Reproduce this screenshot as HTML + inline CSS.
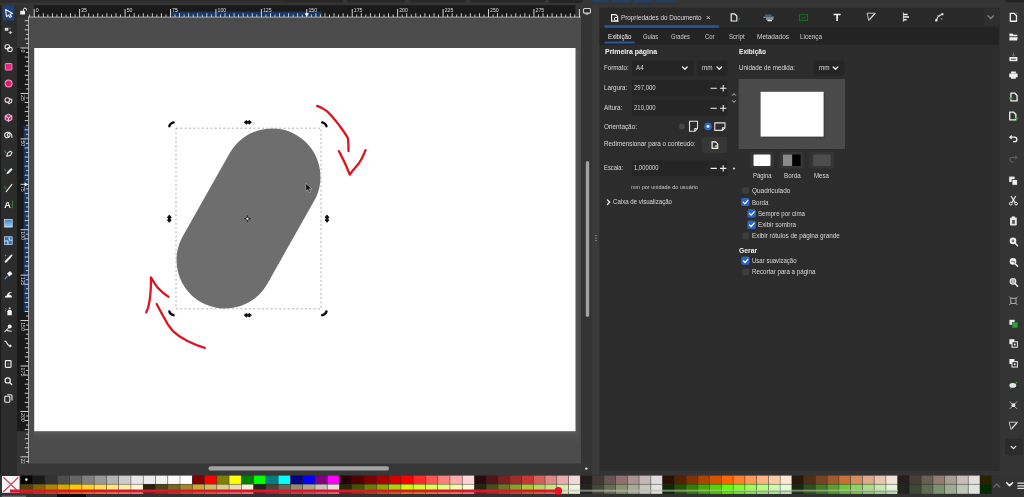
<!DOCTYPE html>
<html lang="pt-BR">
<head>
<meta charset="utf-8">
<title>Inkscape - Propriedades do Documento</title>
<style>
html,body{margin:0;padding:0;background:#2d2d2d;}
body{width:1024px;height:497px;overflow:hidden;position:relative;font-family:"Liberation Sans",sans-serif;color:#e6e6e6;}
#root{position:absolute;left:0;top:0;width:1024px;height:497px;overflow:hidden;background:#2e2e2e;filter:blur(0.45px);}
svg{position:absolute;left:0;top:0;}
.rl{font-family:"Liberation Sans",sans-serif;font-size:5.2px;fill:#dadada;}
.t{position:absolute;white-space:nowrap;font-size:7px;line-height:10px;color:#dadada;transform-origin:0 50%;}
.b{font-weight:bold;color:#f4f4f4;}
.box{position:absolute;background:#242424;border-radius:2px;}
.cb{position:absolute;width:7px;height:7px;border-radius:1.5px;background:#3e3e3e;}
.cb.on{background:#2f6fd0;}
</style>
</head>
<body>
<div id="root">

<!-- ======== base layer: canvas, rulers, palette ======== -->
<svg id="base" width="1024" height="497" viewBox="0 0 1024 497">
<defs>
  <linearGradient id="shB" x1="0" y1="0" x2="0" y2="1">
    <stop offset="0" stop-color="#5a5a5a"/><stop offset="0.3" stop-color="#4f4f4f"/><stop offset="1" stop-color="#4a4a4a"/>
  </linearGradient>
  <linearGradient id="shR" x1="0" y1="0" x2="1" y2="0">
    <stop offset="0" stop-color="#575757"/><stop offset="1" stop-color="#4b4b4b"/>
  </linearGradient>
</defs>
<!-- top strip -->
<rect x="0" y="0" width="1024" height="8" fill="#353535"/>
<rect x="0" y="0" width="283" height="2.600" fill="#2c2c2c"/>
<rect x="283" y="-3" width="60" height="5.5" rx="2" fill="#272727"/>
<rect x="347" y="-3" width="58" height="5.5" rx="2" fill="#272727"/>
<rect x="410" y="-3" width="56" height="5.5" rx="2" fill="#272727"/>
<rect x="470" y="-3" width="75" height="5.5" rx="2" fill="#272727"/>
<rect x="549" y="-3" width="34" height="6" rx="2" fill="#242424"/>
<rect x="592" y="-3" width="17" height="5.2" rx="1.5" fill="#223f66"/>
<rect x="612" y="-3" width="19" height="5.2" rx="1.5" fill="#223f66"/>
<rect x="634" y="-3" width="19" height="5.2" rx="1.5" fill="#223f66"/>
<rect x="656" y="-3" width="19.5" height="5.2" rx="1.5" fill="#223f66"/>
<rect x="1004.8" y="-3" width="30" height="5.2" rx="2" fill="#232323"/>

<!-- left toolbar -->
<rect x="0" y="6" width="17" height="470" fill="#2c2c2c"/>
<!-- canvas desk -->
<rect x="17" y="6" width="564" height="458" fill="#4b4b4b"/>
<!-- page shadow + page -->
<rect x="34.2" y="431" width="545" height="16" fill="url(#shB)"/>
<rect x="575.5" y="50" width="5.5" height="385" fill="url(#shR)"/>
<rect x="34.2" y="48" width="541.3" height="383.2" fill="#ffffff"/>

<!-- rulers -->
<rect x="17" y="5.2" width="564" height="11.8" fill="#353535"/>
<rect x="17" y="5.2" width="11.5" height="458.3" fill="#353535"/>
<rect x="34.2" y="5.2" width="541.3" height="11.8" fill="#1a1a1a"/>
<rect x="17" y="48" width="11.5" height="383.2" fill="#1a1a1a"/>
<rect x="17" y="5.2" width="11.5" height="11.8" fill="#323232"/>
<rect x="170.5" y="11.6" width="151.5" height="5.2" fill="#1b3763"/>
<rect x="23.6" y="126.300" width="4.800" height="185" fill="#1b3763"/>
<rect x="29.21" y="14.40" width="0.9" height="2.6" fill="#e4e4e4" opacity="0.9"/>
<rect x="33.75" y="9.00" width="0.9" height="8" fill="#e4e4e4" opacity="1"/>
<rect x="38.29" y="14.40" width="0.9" height="2.6" fill="#e4e4e4" opacity="0.9"/>
<rect x="42.84" y="13.20" width="0.9" height="3.8" fill="#e4e4e4" opacity="0.95"/>
<rect x="47.38" y="14.40" width="0.9" height="2.6" fill="#e4e4e4" opacity="0.9"/>
<rect x="51.92" y="13.20" width="0.9" height="3.8" fill="#e4e4e4" opacity="0.95"/>
<rect x="56.47" y="14.40" width="0.9" height="2.6" fill="#e4e4e4" opacity="0.9"/>
<rect x="61.01" y="13.20" width="0.9" height="3.8" fill="#e4e4e4" opacity="0.95"/>
<rect x="65.55" y="14.40" width="0.9" height="2.6" fill="#e4e4e4" opacity="0.9"/>
<rect x="70.09" y="13.20" width="0.9" height="3.8" fill="#e4e4e4" opacity="0.95"/>
<rect x="74.64" y="14.40" width="0.9" height="2.6" fill="#e4e4e4" opacity="0.9"/>
<rect x="79.18" y="9.00" width="0.9" height="8" fill="#e4e4e4" opacity="1"/>
<rect x="83.72" y="14.40" width="0.9" height="2.6" fill="#e4e4e4" opacity="0.9"/>
<rect x="88.27" y="13.20" width="0.9" height="3.8" fill="#e4e4e4" opacity="0.95"/>
<rect x="92.81" y="14.40" width="0.9" height="2.6" fill="#e4e4e4" opacity="0.9"/>
<rect x="97.35" y="13.20" width="0.9" height="3.8" fill="#e4e4e4" opacity="0.95"/>
<rect x="101.89" y="14.40" width="0.9" height="2.6" fill="#e4e4e4" opacity="0.9"/>
<rect x="106.44" y="13.20" width="0.9" height="3.8" fill="#e4e4e4" opacity="0.95"/>
<rect x="110.98" y="14.40" width="0.9" height="2.6" fill="#e4e4e4" opacity="0.9"/>
<rect x="115.52" y="13.20" width="0.9" height="3.8" fill="#e4e4e4" opacity="0.95"/>
<rect x="120.07" y="14.40" width="0.9" height="2.6" fill="#e4e4e4" opacity="0.9"/>
<rect x="124.61" y="9.00" width="0.9" height="8" fill="#e4e4e4" opacity="1"/>
<rect x="129.15" y="14.40" width="0.9" height="2.6" fill="#e4e4e4" opacity="0.9"/>
<rect x="133.70" y="13.20" width="0.9" height="3.8" fill="#e4e4e4" opacity="0.95"/>
<rect x="138.24" y="14.40" width="0.9" height="2.6" fill="#e4e4e4" opacity="0.9"/>
<rect x="142.78" y="13.20" width="0.9" height="3.8" fill="#e4e4e4" opacity="0.95"/>
<rect x="147.32" y="14.40" width="0.9" height="2.6" fill="#e4e4e4" opacity="0.9"/>
<rect x="151.87" y="13.20" width="0.9" height="3.8" fill="#e4e4e4" opacity="0.95"/>
<rect x="156.41" y="14.40" width="0.9" height="2.6" fill="#e4e4e4" opacity="0.9"/>
<rect x="160.95" y="13.20" width="0.9" height="3.8" fill="#e4e4e4" opacity="0.95"/>
<rect x="165.50" y="14.40" width="0.9" height="2.6" fill="#e4e4e4" opacity="0.9"/>
<rect x="170.04" y="9.00" width="0.9" height="8" fill="#e4e4e4" opacity="1"/>
<rect x="174.58" y="14.40" width="0.9" height="2.6" fill="#e4e4e4" opacity="0.9"/>
<rect x="179.13" y="13.20" width="0.9" height="3.8" fill="#e4e4e4" opacity="0.95"/>
<rect x="183.67" y="14.40" width="0.9" height="2.6" fill="#e4e4e4" opacity="0.9"/>
<rect x="188.21" y="13.20" width="0.9" height="3.8" fill="#e4e4e4" opacity="0.95"/>
<rect x="192.75" y="14.40" width="0.9" height="2.6" fill="#e4e4e4" opacity="0.9"/>
<rect x="197.30" y="13.20" width="0.9" height="3.8" fill="#e4e4e4" opacity="0.95"/>
<rect x="201.84" y="14.40" width="0.9" height="2.6" fill="#e4e4e4" opacity="0.9"/>
<rect x="206.38" y="13.20" width="0.9" height="3.8" fill="#e4e4e4" opacity="0.95"/>
<rect x="210.93" y="14.40" width="0.9" height="2.6" fill="#e4e4e4" opacity="0.9"/>
<rect x="215.47" y="9.00" width="0.9" height="8" fill="#e4e4e4" opacity="1"/>
<rect x="220.01" y="14.40" width="0.9" height="2.6" fill="#e4e4e4" opacity="0.9"/>
<rect x="224.56" y="13.20" width="0.9" height="3.8" fill="#e4e4e4" opacity="0.95"/>
<rect x="229.10" y="14.40" width="0.9" height="2.6" fill="#e4e4e4" opacity="0.9"/>
<rect x="233.64" y="13.20" width="0.9" height="3.8" fill="#e4e4e4" opacity="0.95"/>
<rect x="238.19" y="14.40" width="0.9" height="2.6" fill="#e4e4e4" opacity="0.9"/>
<rect x="242.73" y="13.20" width="0.9" height="3.8" fill="#e4e4e4" opacity="0.95"/>
<rect x="247.27" y="14.40" width="0.9" height="2.6" fill="#e4e4e4" opacity="0.9"/>
<rect x="251.81" y="13.20" width="0.9" height="3.8" fill="#e4e4e4" opacity="0.95"/>
<rect x="256.36" y="14.40" width="0.9" height="2.6" fill="#e4e4e4" opacity="0.9"/>
<rect x="260.90" y="9.00" width="0.9" height="8" fill="#e4e4e4" opacity="1"/>
<rect x="265.44" y="14.40" width="0.9" height="2.6" fill="#e4e4e4" opacity="0.9"/>
<rect x="269.99" y="13.20" width="0.9" height="3.8" fill="#e4e4e4" opacity="0.95"/>
<rect x="274.53" y="14.40" width="0.9" height="2.6" fill="#e4e4e4" opacity="0.9"/>
<rect x="279.07" y="13.20" width="0.9" height="3.8" fill="#e4e4e4" opacity="0.95"/>
<rect x="283.62" y="14.40" width="0.9" height="2.6" fill="#e4e4e4" opacity="0.9"/>
<rect x="288.16" y="13.20" width="0.9" height="3.8" fill="#e4e4e4" opacity="0.95"/>
<rect x="292.70" y="14.40" width="0.9" height="2.6" fill="#e4e4e4" opacity="0.9"/>
<rect x="297.24" y="13.20" width="0.9" height="3.8" fill="#e4e4e4" opacity="0.95"/>
<rect x="301.79" y="14.40" width="0.9" height="2.6" fill="#e4e4e4" opacity="0.9"/>
<rect x="306.33" y="9.00" width="0.9" height="8" fill="#e4e4e4" opacity="1"/>
<rect x="310.87" y="14.40" width="0.9" height="2.6" fill="#e4e4e4" opacity="0.9"/>
<rect x="315.42" y="13.20" width="0.9" height="3.8" fill="#e4e4e4" opacity="0.95"/>
<rect x="319.96" y="14.40" width="0.9" height="2.6" fill="#e4e4e4" opacity="0.9"/>
<rect x="324.50" y="13.20" width="0.9" height="3.8" fill="#e4e4e4" opacity="0.95"/>
<rect x="329.05" y="14.40" width="0.9" height="2.6" fill="#e4e4e4" opacity="0.9"/>
<rect x="333.59" y="13.20" width="0.9" height="3.8" fill="#e4e4e4" opacity="0.95"/>
<rect x="338.13" y="14.40" width="0.9" height="2.6" fill="#e4e4e4" opacity="0.9"/>
<rect x="342.67" y="13.20" width="0.9" height="3.8" fill="#e4e4e4" opacity="0.95"/>
<rect x="347.22" y="14.40" width="0.9" height="2.6" fill="#e4e4e4" opacity="0.9"/>
<rect x="351.76" y="9.00" width="0.9" height="8" fill="#e4e4e4" opacity="1"/>
<rect x="356.30" y="14.40" width="0.9" height="2.6" fill="#e4e4e4" opacity="0.9"/>
<rect x="360.85" y="13.20" width="0.9" height="3.8" fill="#e4e4e4" opacity="0.95"/>
<rect x="365.39" y="14.40" width="0.9" height="2.6" fill="#e4e4e4" opacity="0.9"/>
<rect x="369.93" y="13.20" width="0.9" height="3.8" fill="#e4e4e4" opacity="0.95"/>
<rect x="374.47" y="14.40" width="0.9" height="2.6" fill="#e4e4e4" opacity="0.9"/>
<rect x="379.02" y="13.20" width="0.9" height="3.8" fill="#e4e4e4" opacity="0.95"/>
<rect x="383.56" y="14.40" width="0.9" height="2.6" fill="#e4e4e4" opacity="0.9"/>
<rect x="388.10" y="13.20" width="0.9" height="3.8" fill="#e4e4e4" opacity="0.95"/>
<rect x="392.65" y="14.40" width="0.9" height="2.6" fill="#e4e4e4" opacity="0.9"/>
<rect x="397.19" y="9.00" width="0.9" height="8" fill="#e4e4e4" opacity="1"/>
<rect x="401.73" y="14.40" width="0.9" height="2.6" fill="#e4e4e4" opacity="0.9"/>
<rect x="406.28" y="13.20" width="0.9" height="3.8" fill="#e4e4e4" opacity="0.95"/>
<rect x="410.82" y="14.40" width="0.9" height="2.6" fill="#e4e4e4" opacity="0.9"/>
<rect x="415.36" y="13.20" width="0.9" height="3.8" fill="#e4e4e4" opacity="0.95"/>
<rect x="419.90" y="14.40" width="0.9" height="2.6" fill="#e4e4e4" opacity="0.9"/>
<rect x="424.45" y="13.20" width="0.9" height="3.8" fill="#e4e4e4" opacity="0.95"/>
<rect x="428.99" y="14.40" width="0.9" height="2.6" fill="#e4e4e4" opacity="0.9"/>
<rect x="433.53" y="13.20" width="0.9" height="3.8" fill="#e4e4e4" opacity="0.95"/>
<rect x="438.08" y="14.40" width="0.9" height="2.6" fill="#e4e4e4" opacity="0.9"/>
<rect x="442.62" y="9.00" width="0.9" height="8" fill="#e4e4e4" opacity="1"/>
<rect x="447.16" y="14.40" width="0.9" height="2.6" fill="#e4e4e4" opacity="0.9"/>
<rect x="451.71" y="13.20" width="0.9" height="3.8" fill="#e4e4e4" opacity="0.95"/>
<rect x="456.25" y="14.40" width="0.9" height="2.6" fill="#e4e4e4" opacity="0.9"/>
<rect x="460.79" y="13.20" width="0.9" height="3.8" fill="#e4e4e4" opacity="0.95"/>
<rect x="465.33" y="14.40" width="0.9" height="2.6" fill="#e4e4e4" opacity="0.9"/>
<rect x="469.88" y="13.20" width="0.9" height="3.8" fill="#e4e4e4" opacity="0.95"/>
<rect x="474.42" y="14.40" width="0.9" height="2.6" fill="#e4e4e4" opacity="0.9"/>
<rect x="478.96" y="13.20" width="0.9" height="3.8" fill="#e4e4e4" opacity="0.95"/>
<rect x="483.51" y="14.40" width="0.9" height="2.6" fill="#e4e4e4" opacity="0.9"/>
<rect x="488.05" y="9.00" width="0.9" height="8" fill="#e4e4e4" opacity="1"/>
<rect x="492.59" y="14.40" width="0.9" height="2.6" fill="#e4e4e4" opacity="0.9"/>
<rect x="497.14" y="13.20" width="0.9" height="3.8" fill="#e4e4e4" opacity="0.95"/>
<rect x="501.68" y="14.40" width="0.9" height="2.6" fill="#e4e4e4" opacity="0.9"/>
<rect x="506.22" y="13.20" width="0.9" height="3.8" fill="#e4e4e4" opacity="0.95"/>
<rect x="510.76" y="14.40" width="0.9" height="2.6" fill="#e4e4e4" opacity="0.9"/>
<rect x="515.31" y="13.20" width="0.9" height="3.8" fill="#e4e4e4" opacity="0.95"/>
<rect x="519.85" y="14.40" width="0.9" height="2.6" fill="#e4e4e4" opacity="0.9"/>
<rect x="524.39" y="13.20" width="0.9" height="3.8" fill="#e4e4e4" opacity="0.95"/>
<rect x="528.94" y="14.40" width="0.9" height="2.6" fill="#e4e4e4" opacity="0.9"/>
<rect x="533.48" y="9.00" width="0.9" height="8" fill="#e4e4e4" opacity="1"/>
<rect x="538.02" y="14.40" width="0.9" height="2.6" fill="#e4e4e4" opacity="0.9"/>
<rect x="542.57" y="13.20" width="0.9" height="3.8" fill="#e4e4e4" opacity="0.95"/>
<rect x="547.11" y="14.40" width="0.9" height="2.6" fill="#e4e4e4" opacity="0.9"/>
<rect x="551.65" y="13.20" width="0.9" height="3.8" fill="#e4e4e4" opacity="0.95"/>
<rect x="556.19" y="14.40" width="0.9" height="2.6" fill="#e4e4e4" opacity="0.9"/>
<rect x="560.74" y="13.20" width="0.9" height="3.8" fill="#e4e4e4" opacity="0.95"/>
<rect x="565.28" y="14.40" width="0.9" height="2.6" fill="#e4e4e4" opacity="0.9"/>
<rect x="569.82" y="13.20" width="0.9" height="3.8" fill="#e4e4e4" opacity="0.95"/>
<rect x="574.37" y="14.40" width="0.9" height="2.6" fill="#e4e4e4" opacity="0.9"/>
<rect x="578.91" y="9.00" width="0.9" height="8" fill="#e4e4e4" opacity="1"/>
<text x="35.80" y="12" class="rl">0</text>
<text x="81.23" y="12" class="rl">25</text>
<text x="126.66" y="12" class="rl">50</text>
<text x="172.09" y="12" class="rl">75</text>
<text x="217.52" y="12" class="rl">100</text>
<text x="262.95" y="12" class="rl">125</text>
<text x="308.38" y="12" class="rl">150</text>
<text x="353.81" y="12" class="rl">175</text>
<text x="399.24" y="12" class="rl">200</text>
<text x="444.67" y="12" class="rl">225</text>
<text x="490.10" y="12" class="rl">250</text>
<text x="535.53" y="12" class="rl">275</text>
<rect x="24.70" y="20.29" width="3.8" height="0.9" fill="#e4e4e4" opacity="0.95"/>
<rect x="25.90" y="24.84" width="2.6" height="0.9" fill="#e4e4e4" opacity="0.9"/>
<rect x="24.70" y="29.38" width="3.8" height="0.9" fill="#e4e4e4" opacity="0.95"/>
<rect x="25.90" y="33.92" width="2.6" height="0.9" fill="#e4e4e4" opacity="0.9"/>
<rect x="24.70" y="38.46" width="3.8" height="0.9" fill="#e4e4e4" opacity="0.95"/>
<rect x="25.90" y="43.01" width="2.6" height="0.9" fill="#e4e4e4" opacity="0.9"/>
<rect x="20.50" y="47.55" width="8" height="0.9" fill="#e4e4e4" opacity="1"/>
<rect x="25.90" y="52.09" width="2.6" height="0.9" fill="#e4e4e4" opacity="0.9"/>
<rect x="24.70" y="56.64" width="3.8" height="0.9" fill="#e4e4e4" opacity="0.95"/>
<rect x="25.90" y="61.18" width="2.6" height="0.9" fill="#e4e4e4" opacity="0.9"/>
<rect x="24.70" y="65.72" width="3.8" height="0.9" fill="#e4e4e4" opacity="0.95"/>
<rect x="25.90" y="70.27" width="2.6" height="0.9" fill="#e4e4e4" opacity="0.9"/>
<rect x="24.70" y="74.81" width="3.8" height="0.9" fill="#e4e4e4" opacity="0.95"/>
<rect x="25.90" y="79.35" width="2.6" height="0.9" fill="#e4e4e4" opacity="0.9"/>
<rect x="24.70" y="83.89" width="3.8" height="0.9" fill="#e4e4e4" opacity="0.95"/>
<rect x="25.90" y="88.44" width="2.6" height="0.9" fill="#e4e4e4" opacity="0.9"/>
<rect x="20.50" y="92.98" width="8" height="0.9" fill="#e4e4e4" opacity="1"/>
<rect x="25.90" y="97.52" width="2.6" height="0.9" fill="#e4e4e4" opacity="0.9"/>
<rect x="24.70" y="102.07" width="3.8" height="0.9" fill="#e4e4e4" opacity="0.95"/>
<rect x="25.90" y="106.61" width="2.6" height="0.9" fill="#e4e4e4" opacity="0.9"/>
<rect x="24.70" y="111.15" width="3.8" height="0.9" fill="#e4e4e4" opacity="0.95"/>
<rect x="25.90" y="115.69" width="2.6" height="0.9" fill="#e4e4e4" opacity="0.9"/>
<rect x="24.70" y="120.24" width="3.8" height="0.9" fill="#e4e4e4" opacity="0.95"/>
<rect x="25.90" y="124.78" width="2.6" height="0.9" fill="#e4e4e4" opacity="0.9"/>
<rect x="24.70" y="129.32" width="3.8" height="0.9" fill="#e4e4e4" opacity="0.95"/>
<rect x="25.90" y="133.87" width="2.6" height="0.9" fill="#e4e4e4" opacity="0.9"/>
<rect x="20.50" y="138.41" width="8" height="0.9" fill="#e4e4e4" opacity="1"/>
<rect x="25.90" y="142.95" width="2.6" height="0.9" fill="#e4e4e4" opacity="0.9"/>
<rect x="24.70" y="147.50" width="3.8" height="0.9" fill="#e4e4e4" opacity="0.95"/>
<rect x="25.90" y="152.04" width="2.6" height="0.9" fill="#e4e4e4" opacity="0.9"/>
<rect x="24.70" y="156.58" width="3.8" height="0.9" fill="#e4e4e4" opacity="0.95"/>
<rect x="25.90" y="161.12" width="2.6" height="0.9" fill="#e4e4e4" opacity="0.9"/>
<rect x="24.70" y="165.67" width="3.8" height="0.9" fill="#e4e4e4" opacity="0.95"/>
<rect x="25.90" y="170.21" width="2.6" height="0.9" fill="#e4e4e4" opacity="0.9"/>
<rect x="24.70" y="174.75" width="3.8" height="0.9" fill="#e4e4e4" opacity="0.95"/>
<rect x="25.90" y="179.30" width="2.6" height="0.9" fill="#e4e4e4" opacity="0.9"/>
<rect x="20.50" y="183.84" width="8" height="0.9" fill="#e4e4e4" opacity="1"/>
<rect x="25.90" y="188.38" width="2.6" height="0.9" fill="#e4e4e4" opacity="0.9"/>
<rect x="24.70" y="192.93" width="3.8" height="0.9" fill="#e4e4e4" opacity="0.95"/>
<rect x="25.90" y="197.47" width="2.6" height="0.9" fill="#e4e4e4" opacity="0.9"/>
<rect x="24.70" y="202.01" width="3.8" height="0.9" fill="#e4e4e4" opacity="0.95"/>
<rect x="25.90" y="206.56" width="2.6" height="0.9" fill="#e4e4e4" opacity="0.9"/>
<rect x="24.70" y="211.10" width="3.8" height="0.9" fill="#e4e4e4" opacity="0.95"/>
<rect x="25.90" y="215.64" width="2.6" height="0.9" fill="#e4e4e4" opacity="0.9"/>
<rect x="24.70" y="220.18" width="3.8" height="0.9" fill="#e4e4e4" opacity="0.95"/>
<rect x="25.90" y="224.73" width="2.6" height="0.9" fill="#e4e4e4" opacity="0.9"/>
<rect x="20.50" y="229.27" width="8" height="0.9" fill="#e4e4e4" opacity="1"/>
<rect x="25.90" y="233.81" width="2.6" height="0.9" fill="#e4e4e4" opacity="0.9"/>
<rect x="24.70" y="238.36" width="3.8" height="0.9" fill="#e4e4e4" opacity="0.95"/>
<rect x="25.90" y="242.90" width="2.6" height="0.9" fill="#e4e4e4" opacity="0.9"/>
<rect x="24.70" y="247.44" width="3.8" height="0.9" fill="#e4e4e4" opacity="0.95"/>
<rect x="25.90" y="251.99" width="2.6" height="0.9" fill="#e4e4e4" opacity="0.9"/>
<rect x="24.70" y="256.53" width="3.8" height="0.9" fill="#e4e4e4" opacity="0.95"/>
<rect x="25.90" y="261.07" width="2.6" height="0.9" fill="#e4e4e4" opacity="0.9"/>
<rect x="24.70" y="265.61" width="3.8" height="0.9" fill="#e4e4e4" opacity="0.95"/>
<rect x="25.90" y="270.16" width="2.6" height="0.9" fill="#e4e4e4" opacity="0.9"/>
<rect x="20.50" y="274.70" width="8" height="0.9" fill="#e4e4e4" opacity="1"/>
<rect x="25.90" y="279.24" width="2.6" height="0.9" fill="#e4e4e4" opacity="0.9"/>
<rect x="24.70" y="283.79" width="3.8" height="0.9" fill="#e4e4e4" opacity="0.95"/>
<rect x="25.90" y="288.33" width="2.6" height="0.9" fill="#e4e4e4" opacity="0.9"/>
<rect x="24.70" y="292.87" width="3.8" height="0.9" fill="#e4e4e4" opacity="0.95"/>
<rect x="25.90" y="297.42" width="2.6" height="0.9" fill="#e4e4e4" opacity="0.9"/>
<rect x="24.70" y="301.96" width="3.8" height="0.9" fill="#e4e4e4" opacity="0.95"/>
<rect x="25.90" y="306.50" width="2.6" height="0.9" fill="#e4e4e4" opacity="0.9"/>
<rect x="24.70" y="311.04" width="3.8" height="0.9" fill="#e4e4e4" opacity="0.95"/>
<rect x="25.90" y="315.59" width="2.6" height="0.9" fill="#e4e4e4" opacity="0.9"/>
<rect x="20.50" y="320.13" width="8" height="0.9" fill="#e4e4e4" opacity="1"/>
<rect x="25.90" y="324.67" width="2.6" height="0.9" fill="#e4e4e4" opacity="0.9"/>
<rect x="24.70" y="329.22" width="3.8" height="0.9" fill="#e4e4e4" opacity="0.95"/>
<rect x="25.90" y="333.76" width="2.6" height="0.9" fill="#e4e4e4" opacity="0.9"/>
<rect x="24.70" y="338.30" width="3.8" height="0.9" fill="#e4e4e4" opacity="0.95"/>
<rect x="25.90" y="342.85" width="2.6" height="0.9" fill="#e4e4e4" opacity="0.9"/>
<rect x="24.70" y="347.39" width="3.8" height="0.9" fill="#e4e4e4" opacity="0.95"/>
<rect x="25.90" y="351.93" width="2.6" height="0.9" fill="#e4e4e4" opacity="0.9"/>
<rect x="24.70" y="356.47" width="3.8" height="0.9" fill="#e4e4e4" opacity="0.95"/>
<rect x="25.90" y="361.02" width="2.6" height="0.9" fill="#e4e4e4" opacity="0.9"/>
<rect x="20.50" y="365.56" width="8" height="0.9" fill="#e4e4e4" opacity="1"/>
<rect x="25.90" y="370.10" width="2.6" height="0.9" fill="#e4e4e4" opacity="0.9"/>
<rect x="24.70" y="374.65" width="3.8" height="0.9" fill="#e4e4e4" opacity="0.95"/>
<rect x="25.90" y="379.19" width="2.6" height="0.9" fill="#e4e4e4" opacity="0.9"/>
<rect x="24.70" y="383.73" width="3.8" height="0.9" fill="#e4e4e4" opacity="0.95"/>
<rect x="25.90" y="388.27" width="2.6" height="0.9" fill="#e4e4e4" opacity="0.9"/>
<rect x="24.70" y="392.82" width="3.8" height="0.9" fill="#e4e4e4" opacity="0.95"/>
<rect x="25.90" y="397.36" width="2.6" height="0.9" fill="#e4e4e4" opacity="0.9"/>
<rect x="24.70" y="401.90" width="3.8" height="0.9" fill="#e4e4e4" opacity="0.95"/>
<rect x="25.90" y="406.45" width="2.6" height="0.9" fill="#e4e4e4" opacity="0.9"/>
<rect x="20.50" y="410.99" width="8" height="0.9" fill="#e4e4e4" opacity="1"/>
<rect x="25.90" y="415.53" width="2.6" height="0.9" fill="#e4e4e4" opacity="0.9"/>
<rect x="24.70" y="420.08" width="3.8" height="0.9" fill="#e4e4e4" opacity="0.95"/>
<rect x="25.90" y="424.62" width="2.6" height="0.9" fill="#e4e4e4" opacity="0.9"/>
<rect x="24.70" y="429.16" width="3.8" height="0.9" fill="#e4e4e4" opacity="0.95"/>
<rect x="25.90" y="433.70" width="2.6" height="0.9" fill="#e4e4e4" opacity="0.9"/>
<rect x="24.70" y="438.25" width="3.8" height="0.9" fill="#e4e4e4" opacity="0.95"/>
<rect x="25.90" y="442.79" width="2.6" height="0.9" fill="#e4e4e4" opacity="0.9"/>
<rect x="24.70" y="447.33" width="3.8" height="0.9" fill="#e4e4e4" opacity="0.95"/>
<rect x="25.90" y="451.88" width="2.6" height="0.9" fill="#e4e4e4" opacity="0.9"/>
<rect x="20.50" y="456.42" width="8" height="0.9" fill="#e4e4e4" opacity="1"/>
<rect x="25.90" y="460.96" width="2.6" height="0.9" fill="#e4e4e4" opacity="0.9"/>
<text transform="translate(20.9 49.60) rotate(90)" class="rl">0</text>
<text transform="translate(20.9 95.03) rotate(90)" class="rl">25</text>
<text transform="translate(20.9 140.46) rotate(90)" class="rl">50</text>
<text transform="translate(20.9 185.89) rotate(90)" class="rl">75</text>
<text transform="translate(20.9 231.32) rotate(90)" class="rl">100</text>
<text transform="translate(20.9 276.75) rotate(90)" class="rl">125</text>
<text transform="translate(20.9 322.18) rotate(90)" class="rl">150</text>
<text transform="translate(20.9 367.61) rotate(90)" class="rl">175</text>
<text transform="translate(20.9 413.04) rotate(90)" class="rl">200</text>
<text transform="translate(20.9 458.47) rotate(90)" class="rl">225</text>
<rect x="28" y="16.6" width="553" height="0.9" fill="#d8d8d8" opacity=".8"/>
<rect x="28" y="16.6" width="0.9" height="447" fill="#d8d8d8" opacity=".8"/>
<!-- ruler pointer markers -->
<path d="M304.6 13.2h4.4l-2.2 3.6z" fill="#ffffff"/>
<path d="M24.6 182.2v4.4l3.6-2.2z" fill="#ffffff"/>


<!-- ======== canvas objects ======== -->
<g id="obj">
  <!-- pill -->
  <g transform="translate(248.5 218.5) rotate(29.5)">
    <rect x="-48.500" y="-96.200" width="97" height="192.400" rx="48.500" ry="48.500" fill="#6e6e6e"/>
  </g>
  <!-- selection box -->
  <rect x="176" y="128.2" width="145" height="180.6" fill="none" stroke="#a6a6a6" stroke-width="0.900" stroke-dasharray="2 2.3"/>
  <!-- handles -->
  <g fill="none" stroke="#0a0a0a" stroke-width="2.400" stroke-linecap="round">
    <path d="M169.300 126.200q0.800-3 4.300-3.800"/>
    <path d="M322.200 122.400q3.500 0.800 4.300 3.800"/>
    <path d="M169.300 311.400q0.800 3 4.300 3.800"/>
    <path d="M322.200 315.200q3.500-0.800 4.300-3.800"/>
  </g>
  <g fill="#0a0a0a" stroke="#0a0a0a" stroke-width="1" stroke-linejoin="round">
    <path d="M244.200 122.300l2.400-1.900v1.100h2.400v-1.100l2.400 1.900-2.400 1.900v-1.100h-2.400v1.100z"/>
    <path d="M244.200 315.200l2.400-1.900v1.100h2.400v-1.100l2.400 1.900-2.400 1.900v-1.100h-2.400v1.100z"/>
    <path d="M169.300 215.100l1.900 2.400h-1.100v2.400h1.100l-1.900 2.400-1.900-2.400h1.100v-2.400h-1.100z"/>
    <path d="M327 215.100l1.900 2.400h-1.100v2.400h1.100l-1.900 2.400-1.900-2.400h1.100v-2.400h-1.100z"/>
  </g>
  <!-- rotation centre -->
  <g stroke="#111" stroke-width="0.9" fill="none">
    <path d="M247.400 215.400v6.600M244.100 218.700h6.600"/>
    <circle cx="247.400" cy="218.700" r="1.500" fill="#eee" stroke="#111" stroke-width="0.7"/>
  </g>
  <!-- red hand drawn arrows -->
  <g fill="none" stroke="#dc1420" stroke-width="2.300" stroke-linecap="round" stroke-linejoin="round">
    <path d="M317.200 105.900C321 107.400 324.400 109 327.100 111.300C331.600 115.200 335 119.800 338.900 124.900C342.400 129.600 345.800 134 348 138.400C348.600 142.400 348.400 146.800 348.500 151.100"/>
    <path d="M338.900 151.100C341 155.200 342.800 158.600 344.400 162C346.400 166.200 348 170.200 349.800 174.600C352.400 170.800 355.200 167.800 357.900 164.600C361 160.600 363.400 155.800 365.500 150.200"/>
    <path d="M204.700 347.900C198 345.800 192.600 343.600 187.500 341C181.800 338.200 177 335 173 331.100C169.400 327.200 166.400 322.600 164 317.500C161.400 312.800 159 308.400 156.700 303.900"/>
    <path d="M146.200 312.400C148 309 149 305.400 149.500 301.200C150.300 296.400 150.700 291.600 150.900 286.700C151 283.600 151 280.400 150.900 277.300C153 281 155.200 284.600 157.600 287.600C160.800 291.200 164.400 294.400 168.500 296.700"/>
  </g>
  <!-- mouse cursor -->
  <path d="M305.600 183.200l0.200 8.200 2-1.900 1.500 3.100 1.300-0.600-1.500-3 2.700-0.200z" fill="#111" stroke="#ddd" stroke-width="0.500"/>
</g>

<!-- band under canvas (scrollbar) -->
<rect x="17" y="463.5" width="581" height="12.5" fill="#373737"/>
<rect x="208.5" y="466.2" width="180.5" height="4.4" rx="2.2" fill="#a2a2a2"/>
<!-- right gutter of canvas -->
<rect x="581" y="5.5" width="11" height="470" fill="#343434"/>
<rect x="591.7" y="5.5" width="7.8" height="470" fill="#3a3a3a"/>
<rect x="585.8" y="161" width="3.4" height="156" rx="1.7" fill="#a2a2a2"/>
<circle cx="586.3" cy="468.6" r="1.2" fill="#e8e8e8"/>
<rect x="583.5" y="8.5" width="7" height="4.6" rx="1" fill="#2c2c2c" stroke="#d2d2d2" stroke-width="1.1"/>
<rect x="585.6" y="13.3" width="2.8" height="1.2" fill="#e4e4e4"/>


<!-- ======== right dock panel ======== -->
<g id="panel">
  <rect x="599.5" y="7.8" width="400" height="464.4" fill="#2c2c2c"/>
  <rect x="599.5" y="7.8" width="400" height="19.6" fill="#292929"/>
  <rect x="599.5" y="27.4" width="400" height="17.4" fill="#232323"/>
  <rect x="599.5" y="471.4" width="400" height="0.9" fill="#3c3c3c"/>
  <rect x="999.5" y="7.8" width="24.5" height="468" fill="#343434"/>
  <rect x="599.5" y="472.2" width="425" height="3.5" fill="#343434"/>
  <!-- tab underline -->
  <rect x="604.3" y="25.2" width="115" height="2.6" rx="1.3" fill="#2a589e"/>
  <rect x="604.3" y="41.5" width="30.5" height="2.1" rx="1" fill="#2a589e"/>
  <!-- document icon on tab -->
  <g transform="translate(611 14)">
    <path d="M0.600 0.600h4.200l1.800 1.800v4.800h-6z" fill="none" stroke="#f2f2f2" stroke-width="1.200"/>
    <circle cx="5" cy="5" r="1.700" fill="#2a2a2a" stroke="#f2f2f2" stroke-width="1"/>
    <path d="M6.100 6.200l1.300 1.400" stroke="#f2f2f2" stroke-width="1.100"/>
  </g>
  <!-- grip dots -->
  <g fill="#c8c8c8"><circle cx="596" cy="235.500" r="0.600"/><circle cx="596" cy="238" r="0.600"/><circle cx="596" cy="240.500" r="0.600"/></g>

  <!-- entry boxes -->
  <g fill="#252525">
    <rect x="632" y="60.400" width="62" height="15.400" rx="2"/>
    <rect x="697" y="60.400" width="30.400" height="15.400" rx="2"/>
    <rect x="813.700" y="60.400" width="30.400" height="15.400" rx="2"/>
    <rect x="632" y="80.200" width="95.400" height="16.200" rx="2"/>
    <rect x="632" y="99.800" width="95.400" height="16.400" rx="2"/>
    <rect x="632" y="160.400" width="95.400" height="15.800" rx="2"/>
  </g>
  <rect x="702" y="137" width="25" height="16" rx="2" fill="#363636"/>
  <!-- combo chevrons -->
  <g fill="none" stroke="#f0f0f0" stroke-width="1.300" stroke-linecap="round" stroke-linejoin="round">
    <path d="M682.600 67l2.300 2.300 2.300-2.300"/>
    <path d="M717 67l2.300 2.300 2.300-2.300"/>
    <path d="M833.200 67l2.300 2.300 2.300-2.300"/>
    <path d="M607.400 199.900l2.300 2.300-2.300 2.300"/>
  </g>
  <!-- minus / plus -->
  <g stroke="#f0f0f0" stroke-width="1.100" stroke-linecap="butt">
    <path d="M710.600 88.200h6.200M720 88.200h6.400M723.200 85v6.400"/>
    <path d="M710.600 108.200h6.200M720 108.200h6.400M723.200 105v6.400"/>
    <path d="M710.600 168.400h6.200M720 168.400h6.400M723.200 165.200v6.400"/>
  </g>
  <!-- link chevrons + dot -->
  <g fill="none" stroke="#cfcfcf" stroke-width="0.900" stroke-linecap="round" stroke-linejoin="round">
    <path d="M732.500 95.300l1.500-1.700 1.500 1.700"/>
    <path d="M732.500 100.700l1.500 1.700 1.500-1.700"/>
  </g>
  <circle cx="734" cy="168.400" r="1" fill="#e8e8e8"/>
  <!-- orientation radios + icons -->
  <circle cx="681.800" cy="126.400" r="3" fill="#454545"/>
  <circle cx="708" cy="126.400" r="3.800" fill="#2b66c2"/>
  <circle cx="708" cy="126.400" r="1.400" fill="#ffffff"/>
  <g fill="none" stroke="#e2e2e2" stroke-width="1.100" stroke-linejoin="round">
    <path d="M689.500 121.300h8v7.200l-2.800 2.800h-5.200z"/>
    <path d="M697.500 128.500h-2.800v2.800"/>
    <path d="M714.800 122.900h10.200v5l-2.600 2.500h-7.600z"/>
    <path d="M725 127.900h-2.600v2.500"/>
  </g>
  <!-- resize-to-content icon -->
  <g transform="translate(711.600 141.400)">
    <path d="M0.500 0.500h3.600l2 2v4.500h-5.600z" fill="none" stroke="#f4f4f4" stroke-width="1.200"/>
    <circle cx="4.600" cy="4.800" r="1.200" fill="#9fd07f"/>
  </g>

  <!-- preview -->
  <rect x="738.600" y="79" width="106.400" height="70" fill="#4a4a4a"/>
  <rect x="762.200" y="93.400" width="63" height="44.800" fill="#3c3c3c" opacity=".8"/>
  <rect x="760.600" y="91.800" width="63" height="44.800" fill="#ffffff"/>
  <!-- colour buttons -->
  <g fill="#353535">
    <rect x="749.600" y="151.600" width="24.400" height="17" rx="2"/>
    <rect x="779.700" y="151.600" width="24.200" height="17" rx="2"/>
    <rect x="809.300" y="151.600" width="24.800" height="17" rx="2"/>
  </g>
  <rect x="753.500" y="154.600" width="17" height="11.300" rx="1" fill="#ffffff"/>
  <rect x="783" y="154.600" width="9.300" height="11.300" fill="#8a8a8a"/>
  <rect x="792.300" y="154.600" width="8.300" height="11.300" fill="#000000"/>
  <rect x="813.200" y="154.600" width="17.500" height="11.300" rx="1" fill="#4d4d4d"/>

  <!-- check boxes -->
  <g fill="#3d3d3d">
    <rect x="742.200" y="187.300" width="6.800" height="6.800" rx="1.500"/>
    <rect x="742.200" y="232.500" width="6.800" height="6.800" rx="1.500"/>
    <rect x="742.200" y="268.400" width="6.800" height="6.800" rx="1.500"/>
  </g>
  <g fill="#2b66c2">
    <rect x="741.200" y="197.900" width="8.200" height="8.200" rx="1.700"/>
    <rect x="747.400" y="209.200" width="8.400" height="8.400" rx="1.700"/>
    <rect x="747.400" y="220.500" width="8.400" height="8.400" rx="1.700"/>
    <rect x="741.300" y="256.600" width="8.200" height="8.200" rx="1.700"/>
  </g>
  <g fill="none" stroke="#ffffff" stroke-width="1.200" stroke-linecap="round" stroke-linejoin="round">
    <path d="M743.200 202.100l1.700 1.700 3-3.400"/>
    <path d="M749.500 213.500l1.700 1.700 3-3.400"/>
    <path d="M749.500 224.800l1.700 1.700 3-3.400"/>
    <path d="M743.300 260.800l1.700 1.700 3-3.400"/>
  </g>
</g>


<!-- ======== left toolbox icons ======== -->
<g id="ltools">
  <rect x="0" y="5.500" width="1.100" height="470" fill="#1c1c1c"/>
  <rect x="2.700" y="5.600" width="11.600" height="15" rx="1.500" fill="#1f427a"/>
  <!-- selector -->
  <path d="M5.600 9.600l0.900 7.200 2-1.700 1.500 2.300 1.500-0.900-1.400-2.300 2.500-0.800z" fill="none" stroke="#f4f4f4" stroke-width="1.100" stroke-linejoin="round"/>
  <!-- lock -->
  <rect x="20.200" y="10.800" width="4.800" height="3.800" rx="0.600" fill="#f2f2f2"/>
  <path d="M23.400 10.800v-1.100a1.600 1.600 0 0 1 3.200 0v0.800" fill="none" stroke="#f2f2f2" stroke-width="1"/>
  <!-- node tool -->
  <rect x="4.800" y="27.800" width="3.600" height="3" fill="#d8d8d8"/>
  <path d="M9.300 28.200h1.300M10.400 31.200l1.300 1.300-1.300 1.300-1.300-1.300z" stroke="#d8d8d8" stroke-width="0.800" fill="#d8d8d8"/>
  <!-- shape builder -->
  <g fill="none" stroke="#ececec" stroke-width="1.150">
    <rect x="5" y="44.700" width="4.600" height="4.200" rx="1.700"/>
    <rect x="7.600" y="47.300" width="4.600" height="4.200" rx="1.700"/>
  </g>
  <!-- rect / ellipse -->
  <rect x="5.300" y="63.500" width="6.600" height="6.600" rx="0.600" fill="#e0287f" stroke="#ff8fc4" stroke-width="0.900"/>
  <circle cx="8.600" cy="83.600" r="3.400" fill="#cf1f6e" stroke="#ff86c0" stroke-width="1.200"/>
  <!-- star/polygon -->
  <g fill="none" stroke="#f3d3e3" stroke-width="1.100">
    <circle cx="7.300" cy="100" r="2.300"/>
    <path d="M9.200 98.800l2.600 0.600-0.300 3-2.600 1.200-1.600-1.400"/>
  </g>
  <!-- 3d box -->
  <g fill="#c92a75" stroke="#f8c9de" stroke-width="1">
    <path d="M8.500 114.200l3.300 1.700v3.700l-3.300 1.700-3.300-1.700v-3.700z"/>
    <path d="M8.500 121.300v-3.400l3.300-2M8.500 117.900l-3.300-2" fill="none"/>
  </g>
  <!-- spiral -->
  <g fill="none" stroke="#e8e8e8" stroke-width="1.100" stroke-linecap="round">
    <path d="M8.600 136.300a1.400 1.400 0 1 1 1.400-1.600a2.700 2.700 0 1 1-2.900-2.300a3.800 3.800 0 0 1 4.800 3.800v1.200"/>
  </g>
  <!-- pen -->
  <path d="M4.600 150.200l1.500 3.300" stroke="#2f8f3a" stroke-width="1.100"/>
  <path d="M6.700 156.200l1-3.300 2.700-1.700 1.600 1.500-1.700 2.800z" fill="none" stroke="#efefef" stroke-width="1.100" stroke-linejoin="round"/>
  <!-- pencil -->
  <path d="M4.400 168.600l1.600 2.600" stroke="#2f8f3a" stroke-width="1.100"/>
  <path d="M6.400 174.200l0.800-2.200 4-4 1.400 1.400-4 4z" fill="#efefef"/>
  <!-- calligraphy -->
  <path d="M4.300 186l1.600 2.800" stroke="#2f8f3a" stroke-width="1.100"/>
  <path d="M6.200 191.600l5.700-7.200" stroke="#e4e4e4" stroke-width="1.200" stroke-linecap="round"/>
  <!-- text -->
  <text x="4.300" y="208.300" font-family="Liberation Sans, sans-serif" font-weight="bold" font-size="9.200" fill="#f4f4f4">A</text>
  <path d="M12.400 200.600v7.800" stroke="#2f8f3a" stroke-width="0.900"/>
  <!-- gradient -->
  <defs><linearGradient id="gr1" x1="0" y1="0" x2="0" y2="1"><stop offset="0" stop-color="#3d86c8"/><stop offset="1" stop-color="#9fd0f2"/></linearGradient></defs>
  <rect x="4.600" y="219.500" width="7.600" height="7.600" fill="url(#gr1)" stroke="#cfe3f2" stroke-width="0.700"/>
  <!-- mesh gradient -->
  <rect x="4.600" y="236.800" width="7.600" height="7.600" fill="#2c76b8" stroke="#cfe3f2" stroke-width="0.700"/>
  <path d="M4.600 241h3.400v3.400M12.200 240.200h-3v-3.400" fill="none" stroke="#e6f1fa" stroke-width="0.900"/>
  <!-- dropper -->
  <path d="M5.600 261.800l4.400-4.600" stroke="#e6e6e6" stroke-width="2" stroke-linecap="round"/>
  <path d="M9.400 256.200l2.400-1.900 0.900 0.900-1.900 2.400z" fill="#f2f2f2"/>
  <circle cx="5.600" cy="255.600" r="0.800" fill="#4a9bd8"/>
  <!-- bucket -->
  <path d="M7 273.400l3.200-2.300 2.300 2.800-3.400 2.600z" fill="#efefef"/>
  <path d="M5.200 278.600l2-2.200" stroke="#4a9bd8" stroke-width="1.300" stroke-linecap="round"/>
  <!-- tweak -->
  <path d="M4.800 297.400h7.200c0-2-1.400-2.800-3-2.600 0.600-1.600 1.800-2.400 3.200-2.600-2.600-1-5 0.600-5.300 3.200-1.200 0-2 0.800-2.100 2z" fill="#f2f2f2"/>
  <!-- spray -->
  <path d="M7.400 315.200h4.400v-4l-1-1.400h-2.400l-1 1.400z" fill="#f2f2f2"/>
  <path d="M8.800 308.200h1.800" stroke="#f2f2f2" stroke-width="1.200"/>
  <path d="M5.400 308.400l1 1M5 310.800h1" stroke="#bdbdbd" stroke-width="0.700"/>
  <!-- eraser -->
  <circle cx="9.700" cy="326.400" r="2" fill="#efefef"/>
  <path d="M4.800 331.600l3.400-3.200M7.400 330.600l4 0.600" stroke="#dcdcdc" stroke-width="1.100" stroke-linecap="round"/>
  <!-- connector -->
  <path d="M5 341.200c2.400 0.400 1.600 3.600 4.400 4.600" fill="none" stroke="#efefef" stroke-width="1.200" stroke-linecap="round"/>
  <path d="M10.200 344.200l1.700 1.700-1.700 1.700-1.700-1.700z" fill="#efefef"/>
  <!-- measure / page -->
  <rect x="5.400" y="360.600" width="5.600" height="6.800" rx="0.800" fill="none" stroke="#ececec" stroke-width="1.200"/>
  <path d="M7.400 364h1.800" stroke="#cfcfcf" stroke-width="0.800"/>
  <!-- zoom -->
  <circle cx="7.700" cy="380.400" r="2.600" fill="none" stroke="#ececec" stroke-width="1.200"/>
  <path d="M9.700 382.500l2 2" stroke="#ececec" stroke-width="1.300" stroke-linecap="round"/>
  <!-- pages -->
  <g fill="none" stroke="#ececec" stroke-width="1.100">
    <path d="M7.200 394.800h3.800a1 1 0 0 1 1 1v4.800"/>
    <rect x="4.800" y="396.200" width="5" height="6" rx="0.900"/>
  </g>
</g>

<!-- palette area -->
<rect x="0" y="475.4" width="1024" height="21.6" fill="#323232"/>
<rect x="20.50" y="475.6" width="12.27" height="8.60" fill="#000000"/>
<rect x="32.77" y="475.6" width="12.27" height="8.60" fill="#1a1a1a"/>
<rect x="45.04" y="475.6" width="12.27" height="8.60" fill="#333333"/>
<rect x="57.31" y="475.6" width="12.27" height="8.60" fill="#4d4d4d"/>
<rect x="69.58" y="475.6" width="12.27" height="8.60" fill="#666666"/>
<rect x="81.85" y="475.6" width="12.27" height="8.60" fill="#808080"/>
<rect x="94.12" y="475.6" width="12.27" height="8.60" fill="#999999"/>
<rect x="106.39" y="475.6" width="12.27" height="8.60" fill="#b3b3b3"/>
<rect x="118.66" y="475.6" width="12.27" height="8.60" fill="#cccccc"/>
<rect x="130.93" y="475.6" width="12.27" height="8.60" fill="#e6e6e6"/>
<rect x="143.20" y="475.6" width="12.27" height="8.60" fill="#ececec"/>
<rect x="155.47" y="475.6" width="12.27" height="8.60" fill="#f2f2f2"/>
<rect x="167.74" y="475.6" width="12.27" height="8.60" fill="#f9f9f9"/>
<rect x="180.01" y="475.6" width="12.27" height="8.60" fill="#ffffff"/>
<rect x="192.28" y="475.6" width="12.27" height="8.60" fill="#800000"/>
<rect x="204.55" y="475.6" width="12.27" height="8.60" fill="#ff0000"/>
<rect x="216.82" y="475.6" width="12.27" height="8.60" fill="#808000"/>
<rect x="229.09" y="475.6" width="12.27" height="8.60" fill="#ffff00"/>
<rect x="241.36" y="475.6" width="12.27" height="8.60" fill="#008000"/>
<rect x="253.63" y="475.6" width="12.27" height="8.60" fill="#00ff00"/>
<rect x="265.90" y="475.6" width="12.27" height="8.60" fill="#008080"/>
<rect x="278.17" y="475.6" width="12.27" height="8.60" fill="#00ffff"/>
<rect x="290.44" y="475.6" width="12.27" height="8.60" fill="#000080"/>
<rect x="302.71" y="475.6" width="12.27" height="8.60" fill="#0000ff"/>
<rect x="314.98" y="475.6" width="12.27" height="8.60" fill="#800080"/>
<rect x="327.25" y="475.6" width="12.27" height="8.60" fill="#ff00ff"/>
<rect x="339.52" y="475.6" width="12.27" height="8.60" fill="#2b0000"/>
<rect x="351.79" y="475.6" width="12.27" height="8.60" fill="#550000"/>
<rect x="364.06" y="475.6" width="12.27" height="8.60" fill="#800000"/>
<rect x="376.33" y="475.6" width="12.27" height="8.60" fill="#aa0000"/>
<rect x="388.60" y="475.6" width="12.27" height="8.60" fill="#d40000"/>
<rect x="400.87" y="475.6" width="12.27" height="8.60" fill="#ff0000"/>
<rect x="413.14" y="475.6" width="12.27" height="8.60" fill="#ff2a2a"/>
<rect x="425.41" y="475.6" width="12.27" height="8.60" fill="#ff5555"/>
<rect x="437.68" y="475.6" width="12.27" height="8.60" fill="#ff8080"/>
<rect x="449.95" y="475.6" width="12.27" height="8.60" fill="#ffaaaa"/>
<rect x="462.22" y="475.6" width="12.27" height="8.60" fill="#ffd5d5"/>
<rect x="474.49" y="475.6" width="11.76" height="8.60" fill="#280b0b"/>
<rect x="486.25" y="475.6" width="11.75" height="8.60" fill="#501616"/>
<rect x="498.01" y="475.6" width="11.75" height="8.60" fill="#782121"/>
<rect x="509.76" y="475.6" width="11.75" height="8.60" fill="#a02c2c"/>
<rect x="521.52" y="475.6" width="11.75" height="8.60" fill="#c83737"/>
<rect x="533.27" y="475.6" width="11.75" height="8.60" fill="#d35f5f"/>
<rect x="545.03" y="475.6" width="11.75" height="8.60" fill="#de8787"/>
<rect x="556.78" y="475.6" width="11.75" height="8.60" fill="#e9afaf"/>
<rect x="568.54" y="475.6" width="11.75" height="8.60" fill="#f4d7d7"/>
<rect x="580.29" y="475.6" width="11.75" height="8.60" fill="#241c1c"/>
<rect x="592.05" y="475.6" width="11.76" height="8.60" fill="#483737"/>
<rect x="603.81" y="475.6" width="11.75" height="8.60" fill="#6c5353"/>
<rect x="615.56" y="475.6" width="11.76" height="8.60" fill="#916f6f"/>
<rect x="627.32" y="475.6" width="11.75" height="8.60" fill="#ac9393"/>
<rect x="639.07" y="475.6" width="11.75" height="8.60" fill="#c8b7b7"/>
<rect x="650.83" y="475.6" width="11.75" height="8.60" fill="#e3dbdb"/>
<rect x="662.58" y="475.6" width="11.75" height="8.60" fill="#2b1100"/>
<rect x="674.34" y="475.6" width="11.75" height="8.60" fill="#552200"/>
<rect x="686.09" y="475.6" width="11.75" height="8.60" fill="#803300"/>
<rect x="697.85" y="475.6" width="11.75" height="8.60" fill="#aa4400"/>
<rect x="709.60" y="475.6" width="11.75" height="8.60" fill="#d45500"/>
<rect x="721.36" y="475.6" width="11.75" height="8.60" fill="#ff6600"/>
<rect x="733.11" y="475.6" width="11.75" height="8.60" fill="#ff7f2a"/>
<rect x="744.87" y="475.6" width="11.75" height="8.60" fill="#ff9955"/>
<rect x="756.62" y="475.6" width="11.75" height="8.60" fill="#ffb380"/>
<rect x="768.38" y="475.6" width="11.75" height="8.60" fill="#ffccaa"/>
<rect x="780.13" y="475.6" width="11.75" height="8.60" fill="#ffe6d5"/>
<rect x="791.88" y="475.6" width="11.76" height="8.60" fill="#28170b"/>
<rect x="803.64" y="475.6" width="11.75" height="8.60" fill="#502d16"/>
<rect x="815.39" y="475.6" width="11.76" height="8.60" fill="#784421"/>
<rect x="827.15" y="475.6" width="11.75" height="8.60" fill="#a05a2c"/>
<rect x="838.90" y="475.6" width="11.76" height="8.60" fill="#c87137"/>
<rect x="850.66" y="475.6" width="11.75" height="8.60" fill="#d38d5f"/>
<rect x="862.41" y="475.6" width="11.76" height="8.60" fill="#deaa87"/>
<rect x="874.17" y="475.6" width="11.75" height="8.60" fill="#e9c6af"/>
<rect x="885.92" y="475.6" width="11.76" height="8.60" fill="#f4e3d7"/>
<rect x="897.68" y="475.6" width="11.75" height="8.60" fill="#241f1c"/>
<rect x="909.43" y="475.6" width="11.76" height="8.60" fill="#483e37"/>
<rect x="921.19" y="475.6" width="11.75" height="8.60" fill="#6c5d53"/>
<rect x="932.95" y="475.6" width="11.75" height="8.60" fill="#917c6f"/>
<rect x="944.70" y="475.6" width="11.75" height="8.60" fill="#ac9d93"/>
<rect x="956.46" y="475.6" width="11.75" height="8.60" fill="#c8beb7"/>
<rect x="968.21" y="475.6" width="11.75" height="8.60" fill="#e3dedb"/>
<rect x="979.97" y="475.6" width="11.75" height="8.60" fill="#2b2200"/>
<rect x="20.50" y="484.2" width="12.27" height="9.60" fill="#554400"/>
<rect x="32.77" y="484.2" width="12.27" height="9.60" fill="#806600"/>
<rect x="45.04" y="484.2" width="12.27" height="9.60" fill="#aa8800"/>
<rect x="57.31" y="484.2" width="12.27" height="9.60" fill="#d4aa00"/>
<rect x="69.58" y="484.2" width="12.27" height="9.60" fill="#ffcc00"/>
<rect x="81.85" y="484.2" width="12.27" height="9.60" fill="#ffd42a"/>
<rect x="94.12" y="484.2" width="12.27" height="9.60" fill="#ffdd55"/>
<rect x="106.39" y="484.2" width="12.27" height="9.60" fill="#ffe680"/>
<rect x="118.66" y="484.2" width="12.27" height="9.60" fill="#ffeeaa"/>
<rect x="130.93" y="484.2" width="12.27" height="9.60" fill="#fff6d5"/>
<rect x="143.20" y="484.2" width="12.27" height="9.60" fill="#28220b"/>
<rect x="155.47" y="484.2" width="12.27" height="9.60" fill="#504416"/>
<rect x="167.74" y="484.2" width="12.27" height="9.60" fill="#786721"/>
<rect x="180.01" y="484.2" width="12.27" height="9.60" fill="#a0892c"/>
<rect x="192.28" y="484.2" width="12.27" height="9.60" fill="#c8ab37"/>
<rect x="204.55" y="484.2" width="12.27" height="9.60" fill="#d3bc5f"/>
<rect x="216.82" y="484.2" width="12.27" height="9.60" fill="#decd87"/>
<rect x="229.09" y="484.2" width="12.27" height="9.60" fill="#e9ddaf"/>
<rect x="241.36" y="484.2" width="12.27" height="9.60" fill="#f4eed7"/>
<rect x="253.63" y="484.2" width="12.27" height="9.60" fill="#24221c"/>
<rect x="265.90" y="484.2" width="12.27" height="9.60" fill="#484537"/>
<rect x="278.17" y="484.2" width="12.27" height="9.60" fill="#6c6753"/>
<rect x="290.44" y="484.2" width="12.27" height="9.60" fill="#918a6f"/>
<rect x="302.71" y="484.2" width="12.27" height="9.60" fill="#aca793"/>
<rect x="314.98" y="484.2" width="12.27" height="9.60" fill="#c8c4b7"/>
<rect x="327.25" y="484.2" width="12.27" height="9.60" fill="#e3e2db"/>
<rect x="339.52" y="484.2" width="12.27" height="9.60" fill="#222b00"/>
<rect x="351.79" y="484.2" width="12.27" height="9.60" fill="#445500"/>
<rect x="364.06" y="484.2" width="12.27" height="9.60" fill="#668000"/>
<rect x="376.33" y="484.2" width="12.27" height="9.60" fill="#88aa00"/>
<rect x="388.60" y="484.2" width="12.27" height="9.60" fill="#aad400"/>
<rect x="400.87" y="484.2" width="12.27" height="9.60" fill="#ccff00"/>
<rect x="413.14" y="484.2" width="12.27" height="9.60" fill="#d4ff2a"/>
<rect x="425.41" y="484.2" width="12.27" height="9.60" fill="#ddff55"/>
<rect x="437.68" y="484.2" width="12.27" height="9.60" fill="#e5ff80"/>
<rect x="449.95" y="484.2" width="12.27" height="9.60" fill="#eeffaa"/>
<rect x="462.22" y="484.2" width="12.27" height="9.60" fill="#f6ffd5"/>
<rect x="474.49" y="484.2" width="11.76" height="9.60" fill="#22280b"/>
<rect x="486.25" y="484.2" width="11.75" height="9.60" fill="#445016"/>
<rect x="498.01" y="484.2" width="11.75" height="9.60" fill="#677821"/>
<rect x="509.76" y="484.2" width="11.75" height="9.60" fill="#89a02c"/>
<rect x="521.52" y="484.2" width="11.75" height="9.60" fill="#abc837"/>
<rect x="533.27" y="484.2" width="11.75" height="9.60" fill="#bcd35f"/>
<rect x="545.03" y="484.2" width="11.75" height="9.60" fill="#cdde87"/>
<rect x="556.78" y="484.2" width="11.75" height="9.60" fill="#dde9af"/>
<rect x="568.54" y="484.2" width="11.75" height="9.60" fill="#eef4d7"/>
<rect x="580.29" y="484.2" width="11.75" height="9.60" fill="#22241c"/>
<rect x="592.05" y="484.2" width="11.76" height="9.60" fill="#454837"/>
<rect x="603.81" y="484.2" width="11.75" height="9.60" fill="#676c53"/>
<rect x="615.56" y="484.2" width="11.76" height="9.60" fill="#8a916f"/>
<rect x="627.32" y="484.2" width="11.75" height="9.60" fill="#a7ac93"/>
<rect x="639.07" y="484.2" width="11.75" height="9.60" fill="#c4c8b7"/>
<rect x="650.83" y="484.2" width="11.75" height="9.60" fill="#e2e3db"/>
<rect x="662.58" y="484.2" width="11.75" height="9.60" fill="#112b00"/>
<rect x="674.34" y="484.2" width="11.75" height="9.60" fill="#225500"/>
<rect x="686.09" y="484.2" width="11.75" height="9.60" fill="#338000"/>
<rect x="697.85" y="484.2" width="11.75" height="9.60" fill="#44aa00"/>
<rect x="709.60" y="484.2" width="11.75" height="9.60" fill="#55d400"/>
<rect x="721.36" y="484.2" width="11.75" height="9.60" fill="#66ff00"/>
<rect x="733.11" y="484.2" width="11.75" height="9.60" fill="#7fff2a"/>
<rect x="744.87" y="484.2" width="11.75" height="9.60" fill="#99ff55"/>
<rect x="756.62" y="484.2" width="11.75" height="9.60" fill="#b3ff80"/>
<rect x="768.38" y="484.2" width="11.75" height="9.60" fill="#ccffaa"/>
<rect x="780.13" y="484.2" width="11.75" height="9.60" fill="#e5ffd5"/>
<rect x="791.88" y="484.2" width="11.76" height="9.60" fill="#17280b"/>
<rect x="803.64" y="484.2" width="11.75" height="9.60" fill="#2d5016"/>
<rect x="815.39" y="484.2" width="11.76" height="9.60" fill="#447821"/>
<rect x="827.15" y="484.2" width="11.75" height="9.60" fill="#5aa02c"/>
<rect x="838.90" y="484.2" width="11.76" height="9.60" fill="#71c837"/>
<rect x="850.66" y="484.2" width="11.75" height="9.60" fill="#8dd35f"/>
<rect x="862.41" y="484.2" width="11.76" height="9.60" fill="#aade87"/>
<rect x="874.17" y="484.2" width="11.75" height="9.60" fill="#c6e9af"/>
<rect x="885.92" y="484.2" width="11.76" height="9.60" fill="#e3f4d7"/>
<rect x="897.68" y="484.2" width="11.75" height="9.60" fill="#1f241c"/>
<rect x="909.43" y="484.2" width="11.76" height="9.60" fill="#3e4837"/>
<rect x="921.19" y="484.2" width="11.75" height="9.60" fill="#5d6c53"/>
<rect x="932.95" y="484.2" width="11.75" height="9.60" fill="#7c916f"/>
<rect x="944.70" y="484.2" width="11.75" height="9.60" fill="#9dac93"/>
<rect x="956.46" y="484.2" width="11.75" height="9.60" fill="#bec8b7"/>
<rect x="968.21" y="484.2" width="11.75" height="9.60" fill="#dee3db"/>
<rect x="979.97" y="484.2" width="11.75" height="9.60" fill="#002b00"/>
<rect x="20.15" y="475.6" width="0.7" height="18.4" fill="#2a2a2a" opacity="0.55"/>
<rect x="32.42" y="475.6" width="0.7" height="18.4" fill="#2a2a2a" opacity="0.55"/>
<rect x="44.69" y="475.6" width="0.7" height="18.4" fill="#2a2a2a" opacity="0.55"/>
<rect x="56.96" y="475.6" width="0.7" height="18.4" fill="#2a2a2a" opacity="0.55"/>
<rect x="69.23" y="475.6" width="0.7" height="18.4" fill="#2a2a2a" opacity="0.55"/>
<rect x="81.50" y="475.6" width="0.7" height="18.4" fill="#2a2a2a" opacity="0.55"/>
<rect x="93.77" y="475.6" width="0.7" height="18.4" fill="#2a2a2a" opacity="0.55"/>
<rect x="106.04" y="475.6" width="0.7" height="18.4" fill="#2a2a2a" opacity="0.55"/>
<rect x="118.31" y="475.6" width="0.7" height="18.4" fill="#2a2a2a" opacity="0.55"/>
<rect x="130.58" y="475.6" width="0.7" height="18.4" fill="#2a2a2a" opacity="0.55"/>
<rect x="142.85" y="475.6" width="0.7" height="18.4" fill="#2a2a2a" opacity="0.55"/>
<rect x="155.12" y="475.6" width="0.7" height="18.4" fill="#2a2a2a" opacity="0.55"/>
<rect x="167.39" y="475.6" width="0.7" height="18.4" fill="#2a2a2a" opacity="0.55"/>
<rect x="179.66" y="475.6" width="0.7" height="18.4" fill="#2a2a2a" opacity="0.55"/>
<rect x="191.93" y="475.6" width="0.7" height="18.4" fill="#2a2a2a" opacity="0.55"/>
<rect x="204.20" y="475.6" width="0.7" height="18.4" fill="#2a2a2a" opacity="0.55"/>
<rect x="216.47" y="475.6" width="0.7" height="18.4" fill="#2a2a2a" opacity="0.55"/>
<rect x="228.74" y="475.6" width="0.7" height="18.4" fill="#2a2a2a" opacity="0.55"/>
<rect x="241.01" y="475.6" width="0.7" height="18.4" fill="#2a2a2a" opacity="0.55"/>
<rect x="253.28" y="475.6" width="0.7" height="18.4" fill="#2a2a2a" opacity="0.55"/>
<rect x="265.55" y="475.6" width="0.7" height="18.4" fill="#2a2a2a" opacity="0.55"/>
<rect x="277.82" y="475.6" width="0.7" height="18.4" fill="#2a2a2a" opacity="0.55"/>
<rect x="290.09" y="475.6" width="0.7" height="18.4" fill="#2a2a2a" opacity="0.55"/>
<rect x="302.36" y="475.6" width="0.7" height="18.4" fill="#2a2a2a" opacity="0.55"/>
<rect x="314.63" y="475.6" width="0.7" height="18.4" fill="#2a2a2a" opacity="0.55"/>
<rect x="326.90" y="475.6" width="0.7" height="18.4" fill="#2a2a2a" opacity="0.55"/>
<rect x="339.17" y="475.6" width="0.7" height="18.4" fill="#2a2a2a" opacity="0.55"/>
<rect x="351.44" y="475.6" width="0.7" height="18.4" fill="#2a2a2a" opacity="0.55"/>
<rect x="363.71" y="475.6" width="0.7" height="18.4" fill="#2a2a2a" opacity="0.55"/>
<rect x="375.98" y="475.6" width="0.7" height="18.4" fill="#2a2a2a" opacity="0.55"/>
<rect x="388.25" y="475.6" width="0.7" height="18.4" fill="#2a2a2a" opacity="0.55"/>
<rect x="400.52" y="475.6" width="0.7" height="18.4" fill="#2a2a2a" opacity="0.55"/>
<rect x="412.79" y="475.6" width="0.7" height="18.4" fill="#2a2a2a" opacity="0.55"/>
<rect x="425.06" y="475.6" width="0.7" height="18.4" fill="#2a2a2a" opacity="0.55"/>
<rect x="437.33" y="475.6" width="0.7" height="18.4" fill="#2a2a2a" opacity="0.55"/>
<rect x="449.60" y="475.6" width="0.7" height="18.4" fill="#2a2a2a" opacity="0.55"/>
<rect x="461.87" y="475.6" width="0.7" height="18.4" fill="#2a2a2a" opacity="0.55"/>
<rect x="474.14" y="475.6" width="0.7" height="18.4" fill="#2a2a2a" opacity="0.55"/>
<rect x="485.90" y="475.6" width="0.7" height="18.4" fill="#2a2a2a" opacity="0.55"/>
<rect x="497.66" y="475.6" width="0.7" height="18.4" fill="#2a2a2a" opacity="0.55"/>
<rect x="509.41" y="475.6" width="0.7" height="18.4" fill="#2a2a2a" opacity="0.55"/>
<rect x="521.17" y="475.6" width="0.7" height="18.4" fill="#2a2a2a" opacity="0.55"/>
<rect x="532.92" y="475.6" width="0.7" height="18.4" fill="#2a2a2a" opacity="0.55"/>
<rect x="544.68" y="475.6" width="0.7" height="18.4" fill="#2a2a2a" opacity="0.55"/>
<rect x="556.43" y="475.6" width="0.7" height="18.4" fill="#2a2a2a" opacity="0.55"/>
<rect x="568.19" y="475.6" width="0.7" height="18.4" fill="#2a2a2a" opacity="0.55"/>
<rect x="579.94" y="475.6" width="0.7" height="18.4" fill="#2a2a2a" opacity="0.55"/>
<rect x="591.70" y="475.6" width="0.7" height="18.4" fill="#2a2a2a" opacity="0.55"/>
<rect x="603.46" y="475.6" width="0.7" height="18.4" fill="#2a2a2a" opacity="0.55"/>
<rect x="615.21" y="475.6" width="0.7" height="18.4" fill="#2a2a2a" opacity="0.55"/>
<rect x="626.97" y="475.6" width="0.7" height="18.4" fill="#2a2a2a" opacity="0.55"/>
<rect x="638.72" y="475.6" width="0.7" height="18.4" fill="#2a2a2a" opacity="0.55"/>
<rect x="650.48" y="475.6" width="0.7" height="18.4" fill="#2a2a2a" opacity="0.55"/>
<rect x="662.23" y="475.6" width="0.7" height="18.4" fill="#2a2a2a" opacity="0.55"/>
<rect x="673.99" y="475.6" width="0.7" height="18.4" fill="#2a2a2a" opacity="0.55"/>
<rect x="685.74" y="475.6" width="0.7" height="18.4" fill="#2a2a2a" opacity="0.55"/>
<rect x="697.50" y="475.6" width="0.7" height="18.4" fill="#2a2a2a" opacity="0.55"/>
<rect x="709.25" y="475.6" width="0.7" height="18.4" fill="#2a2a2a" opacity="0.55"/>
<rect x="721.00" y="475.6" width="0.7" height="18.4" fill="#2a2a2a" opacity="0.55"/>
<rect x="732.76" y="475.6" width="0.7" height="18.4" fill="#2a2a2a" opacity="0.55"/>
<rect x="744.51" y="475.6" width="0.7" height="18.4" fill="#2a2a2a" opacity="0.55"/>
<rect x="756.27" y="475.6" width="0.7" height="18.4" fill="#2a2a2a" opacity="0.55"/>
<rect x="768.02" y="475.6" width="0.7" height="18.4" fill="#2a2a2a" opacity="0.55"/>
<rect x="779.78" y="475.6" width="0.7" height="18.4" fill="#2a2a2a" opacity="0.55"/>
<rect x="791.53" y="475.6" width="0.7" height="18.4" fill="#2a2a2a" opacity="0.55"/>
<rect x="803.29" y="475.6" width="0.7" height="18.4" fill="#2a2a2a" opacity="0.55"/>
<rect x="815.04" y="475.6" width="0.7" height="18.4" fill="#2a2a2a" opacity="0.55"/>
<rect x="826.80" y="475.6" width="0.7" height="18.4" fill="#2a2a2a" opacity="0.55"/>
<rect x="838.55" y="475.6" width="0.7" height="18.4" fill="#2a2a2a" opacity="0.55"/>
<rect x="850.31" y="475.6" width="0.7" height="18.4" fill="#2a2a2a" opacity="0.55"/>
<rect x="862.06" y="475.6" width="0.7" height="18.4" fill="#2a2a2a" opacity="0.55"/>
<rect x="873.82" y="475.6" width="0.7" height="18.4" fill="#2a2a2a" opacity="0.55"/>
<rect x="885.57" y="475.6" width="0.7" height="18.4" fill="#2a2a2a" opacity="0.55"/>
<rect x="897.33" y="475.6" width="0.7" height="18.4" fill="#2a2a2a" opacity="0.55"/>
<rect x="909.08" y="475.6" width="0.7" height="18.4" fill="#2a2a2a" opacity="0.55"/>
<rect x="920.84" y="475.6" width="0.7" height="18.4" fill="#2a2a2a" opacity="0.55"/>
<rect x="932.60" y="475.6" width="0.7" height="18.4" fill="#2a2a2a" opacity="0.55"/>
<rect x="944.35" y="475.6" width="0.7" height="18.4" fill="#2a2a2a" opacity="0.55"/>
<rect x="956.11" y="475.6" width="0.7" height="18.4" fill="#2a2a2a" opacity="0.55"/>
<rect x="967.86" y="475.6" width="0.7" height="18.4" fill="#2a2a2a" opacity="0.55"/>
<rect x="979.62" y="475.6" width="0.7" height="18.4" fill="#2a2a2a" opacity="0.55"/>
<rect x="991.37" y="475.6" width="0.7" height="18.4" fill="#2a2a2a" opacity="0.55"/>
<rect x="20" y="483.9" width="971.6" height="0.7" fill="#2a2a2a" opacity="0.5"/>
<!-- ======== dock tab icons ======== -->
<g id="tabicons">
<path transform="translate(734 17.4) scale(1.0)" d="M-2.800 -3.600h3.400l2.200 2.200v5h-5.600z" fill="none" stroke="#f0f0f0" stroke-width="1.2" stroke-linejoin="round"/>
<path d="M736.800 19.400l1.200 1.300 2.100-2.700" fill="none" stroke="#2a8a35" stroke-width="1"/>
<path d="M765 15.200h6.600" stroke="#2f6fae" stroke-width="1.300"/><path d="M763.400 17.200h10.400" stroke="#6f9fc8" stroke-width="1.300"/><path d="M766 19h7.400M767.400 20.700h4.600" stroke="#e8f0f8" stroke-width="1.200"/>
<rect x="799.600" y="14.600" width="8" height="6" fill="#1c3420" stroke="#1c6a27" stroke-width="1"/><path d="M801.600 19.200l1.300-2.400 1.100 1.600 1.400-2.200" fill="none" stroke="#1c6a27" stroke-width="0.800"/>
<path d="M833.600 14.500h7M837.100 14.500v6.600" stroke="#f4f4f4" stroke-width="1.700" fill="none"/>
<path d="M867 13.200h8.400l-6.600 7.400z" fill="none" stroke="#cfcfcf" stroke-width="0.900"/><path d="M869.600 19.400l5-5.600" stroke="#e4e4e4" stroke-width="1.200"/>
<path d="M903.400 12.400v9.400" stroke="#e6e6e6" stroke-width="0.800"/><path d="M903.400 14.400h4.200M903.400 17.100h5.600M903.400 19.800h3.200" stroke="#f0f0f0" stroke-width="1.500"/>
<path d="M936.400 20.800c0.400-3.400 2.600-5.600 6-6.600" fill="none" stroke="#e8e8e8" stroke-width="1.100"/><rect x="935.200" y="19.200" width="2.200" height="2.200" fill="#f0f0f0"/><rect x="941.400" y="13.200" width="2" height="2" fill="#f0f0f0"/><path d="M937.400 15.400l2 1.200M940.600 18.400l1.600 1" stroke="#d0d0d0" stroke-width="0.800"/>
<rect x="984.200" y="9" width="15.300" height="17" rx="2" fill="#2f2f2f"/><path d="M988 15.800l2.800 2.700 2.800-2.700" fill="none" stroke="#858585" stroke-width="1.200" stroke-linecap="round" stroke-linejoin="round"/>
</g>
<!-- ======== right command bar icons ======== -->
<g id="cmdbar">
<path transform="translate(1013.4 17.3) scale(1.1)" d="M-2.800 -3.600h3.400l2.200 2.200v5h-5.600z" fill="none" stroke="#f0f0f0" stroke-width="1.2" stroke-linejoin="round"/>
<circle cx="1016.6999999999999" cy="13.300" r="0.700" fill="#3aa845"/>
<path d="M1009.4 33.600h3l1 1.200h4v1.400h-8zM1009.4 37.200h8.400l-0.800 3.200h-7.600z" fill="#f0f0f0"/>
<path d="M1013.4 52.400v3.400M1011.8 54.600l1.600 1.700 1.600-1.700" fill="none" stroke="#2f9a3a" stroke-width="1"/><path d="M1009.4 57h8v4.200h-8z" fill="#f0f0f0"/><path d="M1011.0 59.200h4.800" stroke="#2e2e2e" stroke-width="0.900"/>
<path d="M1011.0 71.600h4.800v1.600h-4.800zM1009.1999999999999 73.600h8.400v3.600h-8.400zM1011.0 76.400h4.800v2.400h-4.800z" fill="#f0f0f0"/>
<path transform="translate(1014.0 97) scale(1.1)" d="M-2.800 -3.600h3.400l2.200 2.200v5h-5.600z" fill="none" stroke="#f0f0f0" stroke-width="1.2" stroke-linejoin="round"/>
<path d="M1009.0 98.400h3M1010.6 96.800l1.600 1.600-1.600 1.600" fill="none" stroke="#2f9a3a" stroke-width="1"/>
<path transform="translate(1012.8 116) scale(1.1)" d="M-2.800 -3.600h3.400l2.200 2.200v5h-5.600z" fill="none" stroke="#f0f0f0" stroke-width="1.2" stroke-linejoin="round"/>
<path d="M1014.8 118.400h3M1016.4 116.800l1.600 1.600-1.600 1.600" fill="none" stroke="#2f9a3a" stroke-width="1"/>
<path d="M1010.4 137.200h4.200a2.200 2.200 0 0 1 0 4.400h-1.600" fill="none" stroke="#f0f0f0" stroke-width="1.300"/><path d="M1011.6 134.800l-2.600 2.400 2.600 2.400z" fill="#f0f0f0"/>
<path d="M1016.4 157.400h-4.200a2.200 2.200 0 0 0 0 4.400h1.200" fill="none" stroke="#5c5c5c" stroke-width="1.200"/><path d="M1015.1999999999999 155l2.600 2.400-2.600 2.400z" fill="#5c5c5c"/>
<rect x="1009.1999999999999" y="176.600" width="5.400" height="5.400" fill="#f0f0f0"/><rect x="1012.0" y="179.600" width="5.600" height="5.600" fill="#f0f0f0" stroke="#2e2e2e" stroke-width="0.800"/>
<path d="M1011.0 196l4 6.600M1015.8 196l-4 6.600" stroke="#f0f0f0" stroke-width="1.100"/><circle cx="1010.8" cy="203.600" r="1.400" fill="none" stroke="#f0f0f0" stroke-width="1"/><circle cx="1016.0" cy="203.600" r="1.400" fill="none" stroke="#f0f0f0" stroke-width="1"/>
<rect x="1010.0" y="217.400" width="6.800" height="8" rx="0.800" fill="#e6e6e6"/><rect x="1012.0" y="216.400" width="2.800" height="1.800" fill="#f4f4f4"/><rect x="1012.1999999999999" y="220" width="2.600" height="3.800" fill="#555"/>
<circle cx="1013.0" cy="240.9" r="3.300" fill="#efefef"/><path d="M1015.4 243.5l2.200 2.200" stroke="#efefef" stroke-width="1.500" stroke-linecap="round"/>
<circle cx="1013.0" cy="261.4" r="3.300" fill="#efefef"/><path d="M1015.4 264l2.200 2.200" stroke="#efefef" stroke-width="1.500" stroke-linecap="round"/>
<circle cx="1013.0" cy="281.4" r="3.300" fill="#efefef"/><path d="M1015.4 284l2.200 2.200" stroke="#efefef" stroke-width="1.500" stroke-linecap="round"/>
<circle cx="1013.0" cy="240.900" r="1.300" fill="#777"/>
<path d="M1011.1999999999999 261.400h3.200v1.800" fill="none" stroke="#666" stroke-width="0.900"/>
<path d="M1013.0 278.600v5.600M1011.4 279.600v3.600M1014.6 279.600v3.600" stroke="#777" stroke-width="0.800"/>
<rect x="1010.8" y="298.200" width="5.200" height="5.200" fill="none" stroke="#bdbdbd" stroke-width="0.900"/><path d="M1009.1999999999999 296.600l1.400 1.400M1017.6 296.600l-1.400 1.400M1009.1999999999999 305l1.400-1.400M1017.6 305l-1.400-1.400" stroke="#bdbdbd" stroke-width="0.800"/>
<rect x="1009.4" y="319.800" width="5.200" height="5" fill="#efefef"/><rect x="1012.1999999999999" y="322.400" width="5.600" height="5.400" fill="#2fa23a" stroke="#1d6f26" stroke-width="0.600"/>
<rect x="1009.4" y="339.2" width="5" height="5" fill="#efefef"/><rect x="1012.0" y="341.8" width="5.400" height="5.400" fill="#2e2e2e" stroke="#efefef" stroke-width="1"/><rect x="1013.8" y="343.59999999999997" width="1.800" height="1.800" fill="#efefef"/>
<rect x="1009.4" y="359" width="5" height="5" fill="#efefef"/><rect x="1012.0" y="361.6" width="5.400" height="5.400" fill="#2e2e2e" stroke="#efefef" stroke-width="1"/><rect x="1013.8" y="363.4" width="1.800" height="1.800" fill="#efefef"/>
<ellipse cx="1012.8" cy="385.400" rx="3.400" ry="2.400" fill="#e6e6e6"/><circle cx="1016.4" cy="382.600" r="0.800" fill="#3aa845"/><circle cx="1010.4" cy="388" r="0.700" fill="#3aa845"/>
<circle cx="1013.4" cy="405.200" r="1.900" fill="#efefef"/><path d="M1009.8 401.600l7.200 7.200M1017.0 401.600l-7.200 7.200" stroke="#d4d4d4" stroke-width="0.900"/>
<path d="M1009.1999999999999 422.200h8.400l-6.600 7.400z" fill="none" stroke="#cfcfcf" stroke-width="0.900"/><path d="M1011.8 428.400l5-5.600" stroke="#e8e8e8" stroke-width="1.200"/>
<rect x="1005" y="438.800" width="18" height="16.400" rx="2" fill="#2b2b2b"/><path d="M1011.1999999999999 446.400l2.300 2.200 2.300-2.200" fill="none" stroke="#f0f0f0" stroke-width="1.300" stroke-linecap="round" stroke-linejoin="round"/>
</g>
<!-- ======== palette extras / player progress ======== -->
<g id="palx">
<rect x="2" y="476" width="17.600" height="16.800" fill="#f6f6f6"/>
<path d="M3.400 477.200l15 14.600M18.400 477.200l-15 14.600" stroke="#d04a5a" stroke-width="1.200"/>
<circle cx="26.300" cy="479.600" r="1.300" fill="#e8e8e8"/>
<path d="M993.600 487.400l3.200-3.400 3.200 3.400" fill="none" stroke="#6a6a6a" stroke-width="1.200"/>
<path d="M1006.600 482.600l3 3 3-3" fill="none" stroke="#f0f0f0" stroke-width="1.500" stroke-linecap="round" stroke-linejoin="round"/>
<path d="M1017.400 483.200h7M1017.400 485.800h7M1017.400 488.400h7" stroke="#e0e0e0" stroke-width="1.200"/>
<rect x="0" y="494" width="1024" height="3" fill="#323232"/>
<rect x="57" y="494.200" width="29" height="3" fill="#0c0c0c"/>
<rect x="2" y="495.600" width="24" height="1.400" fill="#8a8a8a" opacity=".6"/>
<rect x="558" y="489.700" width="340" height="2" fill="#b9b9b9" opacity=".62"/>
<rect x="688" y="491.200" width="210" height="1.200" fill="#3a7a3a" opacity=".5"/>
<rect x="10" y="491.400" width="548" height="2.400" fill="#d01830" opacity=".55"/>
<rect x="10" y="489.500" width="548" height="2.700" fill="#e2132f"/>
<circle cx="558.300" cy="490.900" r="3.800" fill="#f0102c"/>
</g>
</svg>

<span class="t" style="left:620.9px;top:13.0px;font-size:6.8px;transform:scaleX(0.931);color:#dcdcdc">Propriedades do Documento</span>
<span class="t" style="left:705.6px;top:13.0px;font-size:6.8px;transform:scaleX(1.158);color:#cfcfcf">×</span>
<span class="t" style="left:607.9px;top:31.8px;font-size:6.8px;transform:scaleX(0.910);color:#f0f0f0">Exibição</span>
<span class="t" style="left:643.0px;top:31.8px;font-size:6.8px;transform:scaleX(0.861);color:#cfcfcf">Guias</span>
<span class="t" style="left:670.6px;top:31.8px;font-size:6.8px;transform:scaleX(0.843);color:#cfcfcf">Grades</span>
<span class="t" style="left:704.6px;top:31.8px;font-size:6.8px;transform:scaleX(0.876);color:#cfcfcf">Cor</span>
<span class="t" style="left:729.0px;top:31.8px;font-size:6.8px;transform:scaleX(0.897);color:#cfcfcf">Script</span>
<span class="t" style="left:757.0px;top:31.8px;font-size:6.8px;transform:scaleX(0.951);color:#cfcfcf">Metadados</span>
<span class="t" style="left:800.0px;top:31.8px;font-size:6.8px;transform:scaleX(0.939);color:#cfcfcf">Licença</span>
<span class="t b" style="left:604.6px;top:47.2px;font-size:7.0px;transform:scaleX(0.992);">Primeira página</span>
<span class="t b" style="left:739.0px;top:47.2px;font-size:7.0px;transform:scaleX(0.938);">Exibição</span>
<span class="t" style="left:604.4px;top:63.0px;font-size:6.8px;transform:scaleX(0.904);">Formato:</span>
<span class="t" style="left:636.0px;top:63.0px;font-size:6.8px;transform:scaleX(0.914);">A4</span>
<span class="t" style="left:702.0px;top:63.0px;font-size:6.8px;transform:scaleX(0.935);">mm</span>
<span class="t" style="left:739.0px;top:63.0px;font-size:6.8px;transform:scaleX(0.920);">Unidade de medida:</span>
<span class="t" style="left:819.0px;top:63.0px;font-size:6.8px;transform:scaleX(0.935);">mm</span>
<span class="t" style="left:604.4px;top:83.2px;font-size:6.8px;transform:scaleX(0.916);">Largura:</span>
<span class="t" style="left:634.4px;top:83.2px;font-size:6.8px;transform:scaleX(0.879);">297,000</span>
<span class="t" style="left:604.4px;top:103.4px;font-size:6.8px;transform:scaleX(0.936);">Altura:</span>
<span class="t" style="left:634.4px;top:103.4px;font-size:6.8px;transform:scaleX(0.879);">210,000</span>
<span class="t" style="left:604.4px;top:121.6px;font-size:6.8px;transform:scaleX(0.939);">Orientação:</span>
<span class="t" style="left:604.4px;top:139.4px;font-size:6.8px;transform:scaleX(0.928);">Redimensionar para o conteúdo:</span>
<span class="t" style="left:604.4px;top:163.4px;font-size:6.8px;transform:scaleX(0.861);">Escala:</span>
<span class="t" style="left:634.4px;top:163.4px;font-size:6.8px;transform:scaleX(0.860);">1,000000</span>
<span class="t" style="left:631.0px;top:181.7px;font-size:5.2px;transform:scaleX(1.058);color:#c8c8c8">mm por unidade do usuário</span>
<span class="t" style="left:613.0px;top:197.2px;font-size:6.8px;transform:scaleX(0.897);">Caixa de visualização</span>
<span class="t" style="left:752.5px;top:170.6px;font-size:6.8px;transform:scaleX(0.878);">Página</span>
<span class="t" style="left:783.5px;top:170.6px;font-size:6.8px;transform:scaleX(0.915);">Borda</span>
<span class="t" style="left:814.4px;top:170.6px;font-size:6.8px;transform:scaleX(0.890);">Mesa</span>
<span class="t" style="left:752.0px;top:186.4px;font-size:6.8px;transform:scaleX(0.949);">Quadriculado</span>
<span class="t" style="left:752.0px;top:197.6px;font-size:6.8px;transform:scaleX(0.904);">Borda</span>
<span class="t" style="left:758.2px;top:209.0px;font-size:6.8px;transform:scaleX(0.908);">Sempre por cima</span>
<span class="t" style="left:758.2px;top:220.2px;font-size:6.8px;transform:scaleX(0.914);">Exibir sombra</span>
<span class="t" style="left:751.8px;top:231.4px;font-size:6.8px;transform:scaleX(0.933);">Exibir rótulos de página grande</span>
<span class="t b" style="left:739.0px;top:245.9px;font-size:7.0px;transform:scaleX(0.964);">Gerar</span>
<span class="t" style="left:751.8px;top:255.7px;font-size:6.8px;transform:scaleX(0.887);">Usar suavização</span>
<span class="t" style="left:751.8px;top:266.9px;font-size:6.8px;transform:scaleX(0.911);">Recortar para a página</span>

</div>
</body>
</html>
